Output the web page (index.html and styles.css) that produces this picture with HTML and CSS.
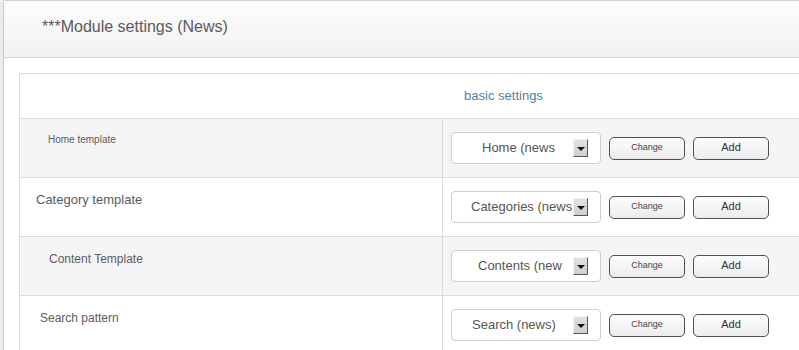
FILE: index.html
```html
<!DOCTYPE html>
<html>
<head>
<meta charset="utf-8">
<link rel="stylesheet" href="styles.css">
</head>
<body>
<div class="panel">
  <div class="panel-head">***Module settings (News)</div>
  <div class="panel-body">
    <div class="table">
      <div class="head-row">basic settings</div>
      <div class="row row-grey">
        <div class="label label-home">Home template</div>
        <div class="controls">
          <div class="select"><span class="select-text pad-home">Home (news</span><span class="arrow"></span></div>
          <button class="btn btn-change">Change</button>
          <button class="btn btn-add">Add</button>
        </div>
      </div>
      <div class="row">
        <div class="label label-cat">Category template</div>
        <div class="controls">
          <div class="select"><span class="select-text pad-cat">Categories (news</span><span class="arrow"></span></div>
          <button class="btn btn-change">Change</button>
          <button class="btn btn-add">Add</button>
        </div>
      </div>
      <div class="row row-grey">
        <div class="label label-content">Content Template</div>
        <div class="controls">
          <div class="select"><span class="select-text pad-content">Contents (new</span><span class="arrow"></span></div>
          <button class="btn btn-change">Change</button>
          <button class="btn btn-add">Add</button>
        </div>
      </div>
      <div class="row">
        <div class="label label-search">Search pattern</div>
        <div class="controls">
          <div class="select"><span class="select-text pad-search">Search (news)</span><span class="arrow"></span></div>
          <button class="btn btn-change">Change</button>
          <button class="btn btn-add">Add</button>
        </div>
      </div>
    </div>
  </div>
</div>
</body>
</html>
```
FILE: styles.css
```css
html, body {
  margin: 0;
  padding: 0;
  background: #fff;
  overflow: hidden;
  font-family: "Liberation Sans", Arial, sans-serif;
}
body {
  width: 799px;
  height: 350px;
}
.panel {
  margin-left: 3px;
  width: 1100px;
  border-left: 1px solid #c8c8c8;
  border-top: 1px solid #cfcfcf;
  border-top-left-radius: 3px;
  box-shadow: -3px 0 0 #ebebeb;
  min-height: 400px;
}
.panel-head {
  height: 52px;
  line-height: 52px;
  padding-bottom: 4px;
  padding-left: 38px;
  font-size: 16px;
  color: #5a5a5a;
  background: linear-gradient(#fdfdfd, #f1f1f1);
  border-bottom: 1px solid #d4d4d4;
}
.panel-body {
  padding: 15px 0 0 15px;
}
.table {
  width: 969px;
  border-top: 1px solid #dcdcdc;
  border-left: 1px solid #dcdcdc;
}
.head-row {
  height: 44px;
  line-height: 44px;
  text-align: center;
  font-size: 13px;
  padding-right: 2px;
  color: #4f82a8;
  border-bottom: 1px solid #dcdcdc;
}
.row {
  display: grid;
  grid-template-columns: 423px 1fr;
  border-bottom: 1px solid #dcdcdc;
  background: #fff;
}
.row-grey {
  background: #f5f5f5;
}
.label {
  border-right: 1px solid #dcdcdc;
  color: #5c5c5c;
  padding-top: 15px;
}
.label-home { font-size: 10px; padding-left: 28px; }
.label-cat { font-size: 13px; padding-left: 16px; padding-top: 14px; }
.label-content { font-size: 12px; padding-left: 29px; }
.label-search { font-size: 12px; padding-left: 20px; }
.controls {
  display: flex;
  align-items: center;
  padding: 13px 0 13px 8px;
}
.select {
  box-sizing: border-box;
  width: 150px;
  height: 32px;
  border: 1px solid #cdcdcd;
  border-radius: 4px;
  background: #fff;
  display: flex;
  align-items: center;
}
.select-text {
  flex: 1;
  overflow: hidden;
  white-space: nowrap;
  font-size: 13px;
  color: #555;
  padding-bottom: 1px;
}
.pad-home { padding-left: 30px; }
.pad-cat { padding-left: 19px; }
.pad-content { padding-left: 26px; }
.pad-search { padding-left: 20px; }
.arrow {
  position: relative;
  box-sizing: border-box;
  width: 15px;
  height: 18px;
  margin-right: 12px;
  background: linear-gradient(#e2e2e2, #cfcfcf);
  border-top: 1px solid #f4f4f4;
  border-left: 1px solid #f4f4f4;
  border-right: 1px solid #555;
  border-bottom: 1px solid #555;
  flex: none;
}
.arrow::after {
  content: "";
  position: absolute;
  left: 3px;
  top: 7px;
  border-left: 4px solid transparent;
  border-right: 4px solid transparent;
  border-top: 4px solid #111;
}
.btn {
  box-sizing: border-box;
  width: 76px;
  height: 23px;
  border: 1px solid #505050;
  border-radius: 5px;
  background: linear-gradient(#fdfdfd, #ececec);
  font-family: "Liberation Sans", Arial, sans-serif;
  padding: 0 0 2px 0;
  color: #444;
}
.btn-change {
  margin-left: 8px;
  font-size: 9px;
}
.btn-add {
  margin-left: 8px;
  font-size: 11px;
  color: #333;
}
```
